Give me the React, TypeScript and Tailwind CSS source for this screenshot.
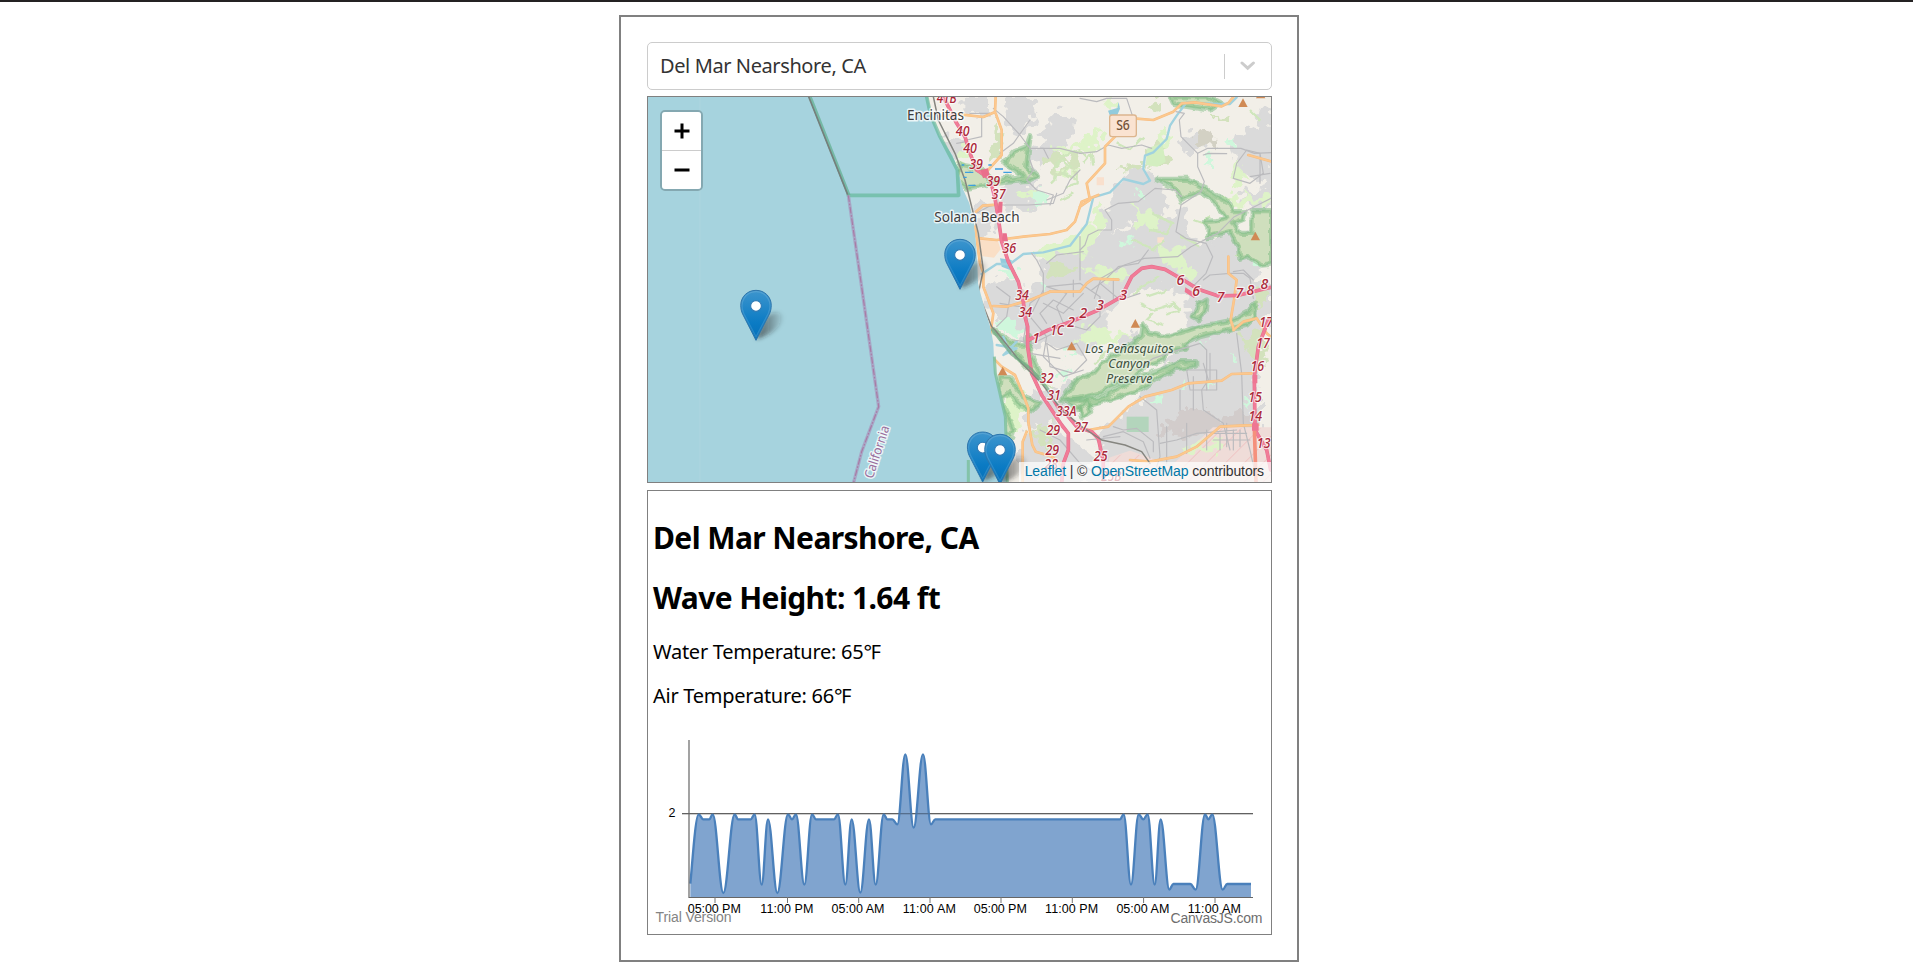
import React from "react";

type Pt = [number, number];

const WAVES: Pt[] = [
  [151, 460], [176, 252], [190, 267], [208, 267], [218, 252], [250, 488], [284, 252], [294, 267], [332, 267],
  [344, 252], [365, 463], [384, 267], [412, 488], [444, 252], [456, 267], [468, 252], [493, 463], [516, 252],
  [528, 267], [582, 267], [594, 252], [616, 463], [635, 267], [661, 487], [687, 267], [707, 463], [731, 252],
  [742, 267], [757, 267], [772, 282], [796, 72], [821, 292], [849, 72], [873, 282], [886, 267], [1440, 267],
  [1451, 252], [1473, 463], [1496, 252], [1510, 267], [1523, 252], [1544, 463], [1562, 267], [1588, 478],
  [1600, 461], [1651, 461], [1667, 478], [1695, 252], [1705, 267], [1717, 252], [1748, 478], [1762, 461], [1833, 461],
];

function smooth(points: Pt[]): string {
  let d = `M${points[0][0]} ${points[0][1]}`;
  for (let i = 1; i < points.length; i++) {
    const [x0, y0] = points[i - 1];
    const [x1, y1] = points[i];
    const k = (x1 - x0) * 0.38;
    d += i === 1 ? `C${x0 + 6} ${y0 - 60} ${x1 - k} ${y1} ${x1} ${y1}` : `C${x0 + k} ${y0} ${x1 - k} ${y1} ${x1} ${y1}`;
  }
  return d;
}

const TICKS: [number, string][] = [
  [715, "05:00 PM"], [787.5, "11:00 PM"], [858.7, "05:00 AM"], [930, "11:00 AM"],
  [1001, "05:00 PM"], [1072.3, "11:00 PM"], [1143.6, "05:00 AM"], [1215, "11:00 AM"],
];

function Chart() {
  const line = smooth(WAVES);
  return (
    <svg className="block" width="623" height="204" viewBox="648 730 623 204" fontFamily='"Liberation Sans", Arial, sans-serif'>
      <path d="M682 813.7H1253" stroke="#666" strokeWidth="1.2" />
      <g transform="translate(640 730.3) scale(.33333)">
        <path d={`${line}V501H151Z`} fill="#4f81bc" fillOpacity=".72" />
        <path d={line} fill="none" stroke="#4a80bb" strokeWidth="7" strokeLinejoin="round" />
      </g>
      <path d="M682 813.7H1253" stroke="#555" strokeWidth="1" strokeOpacity=".35" />
      <path d="M689 740V897.5H1253" fill="none" stroke="#666" strokeWidth="1.2" />
      <text x="672" y="817" fontSize="12.5" textAnchor="middle" fill="#000">2</text>
      <text x="655.500" y="922" fontSize="14" fill="#848484" textLength="76">Trial Version</text>
      <text x="1170.500" y="923" fontSize="14" fill="#6e6e6e" textLength="92">CanvasJS.com</text>
      {TICKS.map(([x, label]) => (
        <g key={x}>
          <path d={`M${x} 897v6`} stroke="#777" />
          <text x={x - 0.7} y="913" fontSize="12.500" textAnchor="middle" fill="#000" textLength="53">{label}</text>
        </g>
      ))}
    </svg>
  );
}

const RESIDENTIAL = [
  "M445 95l30-30 35 15 20 30-30 35-15 30-30 20-30-5-5-30 20-30z",
  "M320 20h60l30 30-20 50-40 40-25-40z",
  "M190 20h80v50l-40 10-40-20z",
  "M300 300l40-25 80 10 20 25-30 40h-90z",
  "M120 140l60 10 20 40-30 30-30-20z",
  "M400 165l45 5 5 30-40 30-25-20z",
  "M230 340l60-5-5 100-50-5z",
  "M420 500l60-30 70 0 60-40 70-10 60-30 80 10 40 60-20 100-80 30-70 10-60 60-80 10-90-20-30-60z",
  "M640 300l50-60 70 10 20 40 20 60-40 40-60 10-60-10z",
  "M770 440l60-60 10-30 20 30 10 70 60 10 40-30 80 10 30 90-20 60-120 30-160-20-40-60z",
  "M1010 140l60-30 10-60 40 10v230l-60-20-50-50-10-50z",
  "M840 150l30-20 50 10-10 40-60 10z",
  "M1030 320l90-40v60l-60 25z",
  "M260 580l90-10 30 50 40-40 120 10 80-20v180l-70 40-120-30-40 20-40-80-50-20-40-30z",
  "M640 770l60-45 30 5-10 30-60 30z",
  "M440 930l80-70 50 20-40 60-60 30z",
  "M820 750l80-30 90-10 40 20 40 90-10 150-90 40-60 60-130 40-80 50-80-10-30-60 20-80 100-60 30-60 60-60z",
  "M380 1030l60-20 50 30 60 30 30 60 60 50h-260l-20-80z",
  "M680 980l100-60 120-20 120-20 60 20v130l-100 30-120 60-110 50-80 10-60-70z",
  "M600 1060l60-70 60 10 20 120-90 20z",
  "M860 590l120-50 60 20 70 20v120l-60 40-60-20-120 20z",
  "M400 900l50 20 30 60-60 50-40-40z",
  "M590 380l60-40 50 0-20 60-60 30z",
  "M960 480l40-20 40 40-60 50z",
];

const INDUSTRIAL = ["M780 1020l80-60 60 0 30 40 100-40 30 20-10 40-130 10-80 10z"];

const BUILTUP = ["M630 1105l60-20 60 20 60 30 130-120h180v200h-490z"];

const MEADOW = [
  "M445 175l80-10 80-50-20 50-90 20z", "M540 470l60-130 10 70-70 100z", "M360 310l40-20 30 15-20 30h-30z",
  "M400 480l80-10 80-50-10 60-120 20z", "M700 355l60 10 20 40-70 10z", "M780 470l60 10 30 60-70-10z",
  "M1000 230l30 10-10 50-20 10z", "M960 320l120 10 30-15-20 25-100 5z", "M540 720l60-5 30 20 40-10 10 15-60 25-70-10z",
  "M320 900l30-30 15 40-10 60 5 60-30-10-15-60z", "M870 1070l90-15-20 25-90 5z", "M560 540l80-5 40 20-50 20z",
  "M170 190l30-20 10 30-20 10z", "M790 110l20 60-30 40-10-30z", "M540 160l20-20 40 30-30-5z", "M1000 250l10-40 15 20z",
  "M620 20l10 40 20-20z", "M480 250l20-20 30 15-30 15z", "M830 530l60 10-20 20z",
];

const GOLF = [
  "M745 180l30-20 20 20 5 35-30 10-30-5z", "M290 90l15 60-20 60-20-5 20-60z", "M440 520l60 10 30 20-50 10-40-20z",
  "M750 40l30-10v30l-20 5z", "M430 205l30-15 40 10-20 15-45 5z", "M500 205l25-5 10 30-20 15z", "M660 235l40-15 45 15-60 5z",
  "M1030 740l60-20 10 40-20 70-30-30z", "M470 230l15 10-5 20-20 0z", "M390 1020l60-20 20 40-40 30z", "M940 80l40 15-10 10z",
  "M1070 600l30 10-10 40z",
];

const MINT = [
  "M400 305l30-10 20 40-40 5z", "M300 695l30-10 30 40-10 15-50-5z", "M300 540l40-10 10 20-30 15z", "M420 580l30 10-10 10z",
  "M480 840l20-5 5 20-15 10z", "M910 220l20-20 10 25z", "M990 150l12 5-5 10z", "M1070 510l20 10-10 12z", "M850 870l10 10-14 10z",
  "M660 450l30 5-20 20z", "M760 930l15-10 5 20z", "M1000 800l12-2 2 16h-12z", "M940 700l15 5-5 15z", "M900 760l12 3-6 12z",
  "M930 880l10 4-6 12z", "M1030 930l12 0 0 14h-12z", "M700 300l20 0-8 14z", "M500 780l14 8-8 16z",
];

const PARKS = [
  "M772 268h88l40 17 55 35 35 20 10 25h35l-5 23-30 12 20 30 35 0 2-68h58v160l-30 3-40-25-25 8-5-38-25-45-40 10-28 5 3-25-13-20 38-3 30-7-10-15-20-20-10-20-40-25-40 15-15 10-15-30z",
  "M485 930l30-40 20-25 45-15 30-35 40-25 50-30 25-25 5-30 15 25 55 10 50-15 40-13 110-22 45-25 20-25v40l-25 25-40 10-100 25-50 25 10 10-60 10-10 25-60 20-20 30-80 30-30 20-60 15z",
  "M500 935l100-10 100-55 80-30 60-25h47v13l-57 7-50 25-60 40-80 25-70 20-30 15z",
  "M880 680l15-35 25-15-5 35-20 22z",
  "M180 225l60 10 35 35 100-10-60-40 25-35 40-15 10-30-10 90 30 30-20 10-110 10-80 15-30-20z",
  "M300 860l30 0 40 60 50 20-20 20-40-10-30-40-30 20 20 40 20 50-5 20-30-10-15-50z",
  "M540 950l20-15 15 30-30 20z", "M810 20h110l40 20-30 20-110-18z", "M275 715l70 50 35 0 5-25 10 60 30 60-20 0-50-60z",
];

const GREY_ROADS = [
  "M540 190l50-5 35-20 40 10 60-10 30 10", "M390 210l10 30-20 30 30 30 50 15-10 30M300 190l40-30 50-70M280 55l30 25 50 55 30 40 40 0 15 30",
  "M540 440v130M745 480l-30 40-60 10-40 40-40 30", "M540 480l15-15 10-30 30-15 40 0 0-30-20-30 40-20 60-5 50-40 60 5 20 20",
  "M893 190l30-15 100 0 40 15 50-2M893 190l0 40 20 45-10 30-60 40-15 80 30 20 60 15 20 40-20 50-40 40", 
  "M893 190l-50-50-5-50 15-20-25-5M910 195l15-5 55 1", "M1113 325l-50 25-60 30-50 50-80 40-40 30-100 5-60 20-70 40-20 60",
  "M910 570l20-15 60-5 40 0 20 15 10 60", "M1000 545l30-5 30 30", "M1010 730l15 120 5 150 20 80 20 90", "M910 820l15 50-20 30 5 60 60 40 20 80",
  "M710 840l50-35 60-20 80-25 20 20v120M440 520l30-25 80-10M395 490l15 20 20 40 0 60-40 30-20 110 20 40 90 15",
  "M440 590l100-10 60 40 0 60-40 40-70-20-20-50 30-40zM440 760l30 20 60-20 30 50-40 40-70-20z", "M430 600l-40 80 50 60-10 60 60 60 60-20",
  "M340 750l60 10 60-30M290 590l40 30-10 60-30 30M300 640l60 10", "M860 840l90 0 0 60-80 0zM840 900v60M880 860v100M930 790v80",
  "M720 920l50 40 10 140-10 30M610 1040l60-15 60 30 20 50M560 1050l100-10", "M640 1010l30 10 40-5 50 40 0 30",
  "M780 1060l50-10 60-20 120-10M800 1010v110M860 1000v90M980 1000v70M920 1020v60", "M420 1020l60 30 60 70 60 40",
  "M1010 220l30-40 40 10 10 60-40 30-50-15zM1080 190l0 90M1050 260l60-10", "M270 70l-60 0M200 150l45-10 0-60M170 160l30-5",
  "M540 25l50 10 30-10 60 0 20 60M420 175l60 0 60 15M540 240l-30 30-20 40-50 20", "M230 370l35-20 20-5 100 0 75-5 10-30",
  "M430 640l60 30 60-60M440 700l-20-30 40-40 60 30M520 570v50M600 580l60 50 60-20M640 570l0 60",
  "M940 1030h100M940 1050h110M960 1030v50M1000 1020v60M1020 1020v50",
];

const ORANGE_ROADS = [
  "M120 78l60-5 70 8 35-15 2-46M287 70l18 50 0 75-45 50", "M228 365l20-18 45-3M240 445l50 5 80-10 80-8 50-12 25-25 20-60 50-20",
  "M540 350l30-20-10-50 55-60 0-50 40-40M700 85l60 5 60-25 25-25 40-3 80 12 20-10 15-18",
  "M1045 195l70 20", "M450 605l90 0 20-25 20-14 75 3", "M985 500l0 50 25 20-8 60-10 60 10 30",
  "M450 605l-60 25-70 20-40-2", "M225 410l15 110 10 30 0 40 30 80-10 70 5 60 30 30 40 25 25 60 15 40 0 40 12 70 10 20 50 15 30 30",
  "M380 1025l-12 30 0 121", "M565 1020l60-10 60-60 50-30 80-20 50-20 100-8 30-20 60-2", "M690 1110l60 5 80-15 60-30 70-60 60-3 55-2",
  "M1000 720l30-25 40-10 30 45 12 10",
];

const PINK_ROADS = [
  "M130 20l40 80 25 40 15 50 20 50 40 25 15 60 10 60 10 70 20 60 30 60 15 60 5 45 8 30 0 60 12 80 30 65 60 90 20 25 0 50-15 40-5 60 0 110",
  "M385 750l60-30 80-30 70-30 70-40 30-60 30-25 30-5 40 8 60 35 40 25 60 20 60-2 80-20 50-10",
  "M480 950l50 60 45 15 20 20 15 70 0 56", "M1105 690l-30 80-12 90 2 160 35 60 12 60",
];

const LABELS: [number, number, string][] = [
  [140, 38, "41B"], [188, 139, "40"], [210, 189, "40"], [228, 236, "39"], [280, 287, "39"], [296, 328, "37"], [328, 489, "36"],
  [366, 631, "34"], [376, 681, "34"], [408, 759, "1"], [471, 735, "1C"], [513, 712, "2"], [550, 685, "2"], [600, 661, "3"], [670, 629, "3"],
  [440, 879, "32"], [462, 929, "31"], [499, 979, "33A"], [543, 1026, "27"], [460, 1035, "29"], [457, 1095, "29"], [453, 1137, "28"],
  [841, 586, "6"], [888, 618, "6"], [962, 635, "7"], [1018, 624, "7"], [1051, 615, "8"], [1093, 597, "8"],
  [1098, 710, "17"], [1089, 775, "17"], [1072, 842, "16"], [1065, 936, "15"], [1066, 994, "14"], [1091, 1075, "13"], [602, 1112, "25"], [634, 1173, "25B"],
];

const LABEL_WIDTHS = [0, 15, 41, 60];

const PEAKS: Pt[] = [[1029, 38], [1082, 12], [1066, 438], [515, 768], [308, 843], [706, 700]];

function Marker({ x, y }: { x: number; y: number }) {
  return (
    <g transform={`translate(${x} ${y + 1}) scale(3.75)`}>
      <path d="M0-1L6-16C11-23 18-24 21-20C24-14 13-4 0-1Z" fill="url(#shade)" filter="url(#soft)" />
      <path
        d="M0 0L-10.700-21C-11.700-23-12.200-25.500-12.200-28C-12.200-35-6.700-40-0-40S12.200-35 12.200-28C12.200-25.500 11.700-23 10.700-21Z"
        fill="url(#pin)" stroke="#2f76ac" strokeWidth=".8"
      />
      <path d="M0-2.800L-9.800-21.500C-14-31-8-38.900 0-38.900S14-31 9.800-21.500Z" fill="none" stroke="#fff" strokeOpacity=".13" strokeWidth="1" />
      <circle cy="-27.500" r="4.300" fill="#fff" stroke="#2f7ab5" strokeWidth=".9" />
    </g>
  );
}

function Strokes({ paths, color, width, opacity = 1 }: { paths: string[]; color: string; width: number; opacity?: number }) {
  return (
    <g fill="none" stroke={color} strokeWidth={width} strokeOpacity={opacity} strokeLinejoin="round" strokeLinecap="round">
      {paths.map((d, i) => <path key={i} d={d} />)}
    </g>
  );
}

function Fills({ paths, color }: { paths: string[]; color: string }) {
  return (
    <g fill={color} stroke={color} strokeWidth="6" strokeLinejoin="round">
      {paths.map((d, i) => <path key={i} d={d} />)}
    </g>
  );
}

const LAND =
  "M80 0L92 70 120 140 158 195 172 235 182 270 190 300 208 340 222 400 227 450 232 520 234 580 242 612 258 670 272 715 280 760 283 830 290 870 305 930 315 980 317 1030 316 1100 322 1180H1120V0Z";

function MapView() {
  return (
    <svg className="block" width="623" height="385" viewBox="-756 21 1869 1155" fontFamily='"Noto Sans", sans-serif'>
      <defs>
        <linearGradient id="pin" x1="0" y1="0" x2="0" y2="1">
          <stop offset="0" stopColor="#3d95cd" />
          <stop offset=".65" stopColor="#0b7bc4" />
          <stop offset="1" stopColor="#0670b8" />
        </linearGradient>
        <linearGradient id="shade" x1="0" y1="0" x2="1" y2="0">
          <stop offset="0" stopColor="#222" stopOpacity=".65" />
          <stop offset=".45" stopColor="#222" stopOpacity=".4" />
          <stop offset="1" stopColor="#222" stopOpacity=".05" />
        </linearGradient>
        <filter id="soft" x="-40%" y="-40%" width="180%" height="180%"><feGaussianBlur stdDeviation="1.600" /></filter>
        <filter id="rough" filterUnits="userSpaceOnUse" x="0" y="0" width="1140" height="1190">
          <feTurbulence type="fractalNoise" baseFrequency=".035" numOctaves="2" seed="4" result="n" />
          <feDisplacementMap in="SourceGraphic" in2="n" scale="70" xChannelSelector="R" yChannelSelector="G" />
        </filter>
        <filter id="ragged" filterUnits="userSpaceOnUse" x="0" y="0" width="1140" height="1190">
          <feTurbulence type="fractalNoise" baseFrequency=".045" numOctaves="1" seed="9" result="n" />
          <feDisplacementMap in="SourceGraphic" in2="n" scale="20" xChannelSelector="R" yChannelSelector="G" result="d" />
          <feGaussianBlur in="d" stdDeviation="1.200" />
        </filter>
        <pattern id="hatch" width="40" height="40" patternUnits="userSpaceOnUse" patternTransform="rotate(45)">
          <path d="M0 0V40" stroke="#efbcbc" strokeWidth="4" />
        </pattern>
        <clipPath id="land"><path d={LAND} /></clipPath>
      </defs>
      <rect x="-756" y="21" width="1869" height="1155" fill="#a6d3de" />
      <path d="M-600 21V1176" stroke="#b4d8df" strokeWidth="2" />
      <path d={LAND} fill="#f2efe8" />
      <g clipPath="url(#land)">
        <g filter="url(#rough)">
          <Fills paths={RESIDENTIAL} color="#dadada" />
          <Fills paths={INDUSTRIAL} color="#d2cccb" />
        </g>
        <Fills paths={BUILTUP} color="#efdcd8" />
        <path d={BUILTUP[0]} fill="url(#hatch)" />
        <g filter="url(#rough)">
          <path d="M895 135l25-15 20 20 10 35-40-10-20-10z" fill="#d3d1c4" />
          <Fills paths={MEADOW} color="#def3c8" />
          <Fills paths={GOLF} color="#d3e2bd" />
          <Fills paths={MINT} color="#cff7dc" />
        </g>
        <path d="M742 175l45-15 10 55-25 15-35-5z" fill="#d3eec0" />
        <path d="M232 448l60 0 10 30-20 25-40-5z" fill="#fadfc6" />
        <path d="M680 980h66v46h-66z" fill="#b3d5bc" />
        <path d="M772 442h20v16h-20zM590 262h22v24h-22z" fill="#f9e0cd" />
        <g fill="none" stroke="#cfe6bc" strokeWidth="7" strokeLinejoin="round" filter="url(#ragged)">
          <path d="M460 230l30-20 20 20-20 20 40 20M480 200l60-20 20 20M500 290l30-10 0-30M480 330l40-20M550 220l25-30 5 40M720 640l40 20 60-20 20 20-40 10M740 620l60-20M580 820l60-50M760 370l60 30-20 30-50-10M880 390l30 10 20-20M420 880l40 10M170 210l30 20M470 260l-20 20" />
          <path d="M700 450l60 30 30-30M840 440l60 30M1050 60l30 30M650 160l40 20 40-40M1010 500l20-30 20 20M780 560l-60 35-20 20M760 670l-20 20 50 15" />
        </g>
        <g filter="url(#ragged)">
          {PARKS.map((d, i) => (
            <g key={i} strokeLinejoin="round">
              <path d={d} fill="#cfdfbd" />
              <path d={d} fill="none" stroke="#7dbb82" strokeOpacity=".5" strokeWidth="16" />
              <path d={d} fill="none" stroke="#74b87d" strokeOpacity=".45" strokeWidth="5" />
            </g>
          ))}
        </g>
        <path d="M624 62l28-8 4-18 4 20-12 28-18-6zM300 505l35 5-5 30-25-10z" fill="#93cbdc" />
        <Strokes
          paths={["M1010 22l-20 20-40 0-90-5-30 40-20 30-10 40-40 40-25 10-5 40 20 35-20 10-60-15-40 40-50 15-20 80-50 65-80 20-60 5-40 30-40 0-45 30", "M290 765l60 10-40 20 40-40M310 740l20 50"]}
          color="#a0d2df" width={7}
        />
        <Strokes paths={GREY_ROADS} color="#bbbbbe" width={3.5} />
        <Strokes paths={ORANGE_ROADS} color="#f7bd80" width={8} />
        <Strokes paths={ORANGE_ROADS} color="#fcc88e" width={5} />
        <Strokes paths={PINK_ROADS} color="#e2708d" width={11} />
        <Strokes paths={PINK_ROADS} color="#f27b97" width={8} />
        <path d="M1063 1010l5 166" stroke="#f5907c" strokeWidth="11" />
        <path d="M242 240l22-5 5 22-20 8zM296 335l12 0-2 40-14-10zM307 430l13 0 4 24-17 0zM455 930l25 18-5 15z" fill="#e96f8c" />
        <path d="M1058 855h14v25h-14zM1056 1000h20v22h-20zM856 592l32 20-6 12-28-18z" fill="#ee7693" />
        <Strokes paths={["M100 20l15 70 50 100 30 80 20 80 20 80 15 110-15 70 40 100 10 10 80 100 60 60 60 80 60 50 60 40 70 15 50 20 25 35"]} color="#85857f" width={4.5} />
        <Strokes paths={["M275 718l60 75 60 45 50 60"]} color="#6ea782" width={8} opacity={0.7} />
        <g stroke="#3d9fe0" strokeWidth="4"><path d="M195 247h25M205 286h22M285 237h24M310 247h25M190 262h10M185 225h8M265 225h10" /></g>
      </g>
      <Strokes paths={["M-155 316H176L172 240 120 140 92 75 80 20"]} color="#60b795" width={11} opacity={0.65} />
      <path d="M205 1176V1110M322 1176L316 980 302 920 286 850 283 800" fill="none" stroke="#7abf9b" strokeWidth="9" strokeOpacity=".8" />
      <path d="M-270 20L-153 316" stroke="#68b397" strokeWidth="10" strokeOpacity=".8" />
      <path d="M-274 20L-157 314" stroke="#757f7b" strokeWidth="5" />
      <path d="M-155 316L-118 570-64 950-115 1085-139 1177" fill="none" stroke="#a79abf" strokeWidth="10" strokeOpacity=".75" />
      <path d="M-155 316L-118 570-64 950-115 1085-139 1177" fill="none" stroke="#a97ba5" strokeWidth="3.500" strokeDasharray="20 5 5 5" />
      {PEAKS.map(([x, y], i) => <path key={i} d={`M${x} ${y - 13}l14 26h-28z`} fill="#d08a55" />)}
      <rect x="629" y="75" width="80" height="65" rx="7" fill="#fae3d1" stroke="#dcb58e" strokeWidth="4" />
      <text x="669" y="121" fontSize="41" fontWeight="500" textAnchor="middle" textLength="41" lengthAdjust="spacingAndGlyphs" fill="#705137">S6</text>
      <g fontSize="42" fontStyle="italic" fontWeight="500" textAnchor="middle" fill="#ab2738" stroke="#fff" strokeOpacity=".7" strokeWidth="7" strokeLinejoin="round" paintOrder="stroke">
        {LABELS.map(([x, y, s], i) => (
          <text key={i} x={x} y={y} textLength={s.length > 1 ? LABEL_WIDTHS[s.length] : undefined} lengthAdjust="spacingAndGlyphs">{s}</text>
        ))}
      </g>
      <g fill="#3d3d3d" stroke="#fff" strokeOpacity=".75" strokeWidth="9" strokeLinejoin="round" paintOrder="stroke" fontSize="44">
        <text x="21" y="91" textLength="171" lengthAdjust="spacingAndGlyphs">Encinitas</text>
        <text x="103" y="395" textLength="256" lengthAdjust="spacingAndGlyphs">Solana Beach</text>
        <g fontStyle="italic" fill="#40513f" fontSize="39" strokeOpacity=".45">
          <text x="555" y="790" textLength="266" lengthAdjust="spacingAndGlyphs">Los Peñasquitos</text>
          <text x="625" y="834" textLength="125" lengthAdjust="spacingAndGlyphs">Canyon</text>
          <text x="619" y="879" textLength="138" lengthAdjust="spacingAndGlyphs">Preserve</text>
        </g>
        <text transform="translate(-82 1168) rotate(-72)" fontSize="39" fill="#9a6d9c" textLength="164" lengthAdjust="spacingAndGlyphs">California</text>
      </g>
      <Marker x={180} y={597} />
      <Marker x={-432} y={750} />
      <Marker x={248} y={1175} />
      <Marker x={300} y={1182} />
    </svg>
  );
}

export default function App() {
  return (
    <div className="flex min-h-screen justify-center border-t-2 border-[#242223] bg-white pt-[13px] pl-[5px]">
      <main className="flex h-[947px] w-[680px] flex-col border-2 border-[#808080] pt-[25px] pr-[25px] pl-[26px] font-['Noto_Sans',sans-serif]">
        <div className="flex h-12 shrink-0 items-center rounded-[5px] border border-[#ccc] pr-[15px] pl-3 text-[#333]">
          <span className="grow text-[20px] tracking-[-0.4px]">Del Mar Nearshore, CA</span>
          <span className="h-[25px] w-px bg-[#ccc]" />
          <svg className="ml-[15px]" width="16" height="10" viewBox="0 0 16 10" fill="none" stroke="#ccc" strokeWidth="3" strokeLinecap="round">
            <path d="M2 2l5.700 5.200L13.400 2" />
          </svg>
        </div>

        <section className="relative mt-1.5 h-[387px] shrink-0 overflow-hidden border border-[#808080]">
          <MapView />
          <div className="absolute top-[13px] left-[12px] h-[81px] w-[42.500px] rounded-[5px] border-2 border-black/20 bg-clip-padding">
            <div className="flex h-full flex-col overflow-hidden rounded-[3px] bg-white">
              <button className="flex h-[39px] items-center justify-center border-b border-[#ccc]">
                <svg className="ml-px" width="16" height="16" viewBox="0 0 16 16" stroke="#000" strokeWidth="3"><path d="M.5 8h15M8 .5v15" /></svg>
              </button>
              <button className="flex h-[38px] items-center justify-center">
                <svg className="ml-px" width="16" height="16" viewBox="0 0 16 16" stroke="#000" strokeWidth="3"><path d="M.5 8h15" /></svg>
              </button>
            </div>
          </div>
          <div className="absolute right-0 bottom-0 h-5 bg-white/70 pr-[7px] pl-[6px] font-['Liberation_Sans',sans-serif] text-[14px] leading-[19px] tracking-[-0.11px] whitespace-nowrap text-[#333]">
            <span className="text-[#0078a8]">Leaflet</span> | © <span className="text-[#0078a8]">OpenStreetMap</span> contributors
          </div>
        </section>

        <section className="mt-[7px] flex h-[445px] shrink-0 flex-col border border-[#808080] text-black">
          <h1 className="mt-[26px] h-[60px] pl-[5px] text-[30px] leading-[42px] font-bold tracking-[-0.6px]">Del Mar Nearshore, CA</h1>
          <h1 className="h-[61px] pl-[5px] text-[30px] leading-[42px] font-bold tracking-[-0.6px]">Wave Height: 1.64 ft</h1>
          <p className="h-11 pl-[5px] text-[20px] leading-[28px] tracking-[-0.26px]">Water Temperature: 65℉</p>
          <p className="h-12 pl-[5px] text-[20px] leading-[28px] tracking-[-0.26px]">Air Temperature: 66℉</p>
          <Chart />
        </section>
      </main>
    </div>
  );
}
